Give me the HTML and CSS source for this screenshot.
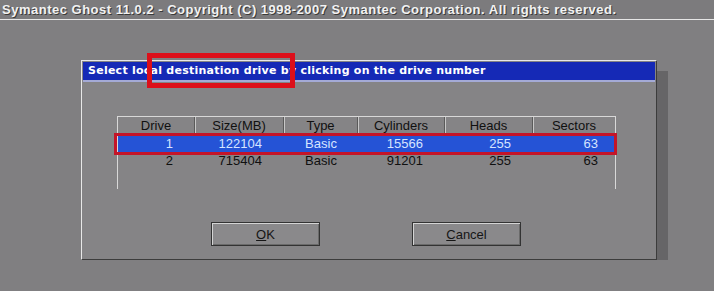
FILE: index.html
```html
<!DOCTYPE html>
<html lang="en">
<head>
  <meta charset="UTF-8">
  <title>Symantec Ghost</title>
  <link rel="stylesheet" href="styles.css">
</head>
<body>

  <div class="topbar">Symantec Ghost 11.0.2 - Copyright (C) 1998-2007 Symantec Corporation. All rights reserved.</div>

  <div class="dialog">
    <div class="title">Select local destination drive by clicking on the drive number</div>
    <div class="mark mark-title"></div>

    <div class="drives">
      <div class="row head">
        <div>Drive</div>
        <div>Size(MB)</div>
        <div>Type</div>
        <div>Cylinders</div>
        <div>Heads</div>
        <div>Sectors</div>
      </div>
      <div class="row data selected">
        <div>1</div>
        <div>122104</div>
        <div class="mid">Basic</div>
        <div>15566</div>
        <div>255</div>
        <div>63</div>
      </div>
      <div class="row data">
        <div>2</div>
        <div>715404</div>
        <div class="mid">Basic</div>
        <div>91201</div>
        <div>255</div>
        <div>63</div>
      </div>
    </div>
    <div class="mark mark-row"></div>

    <div class="buttons">
      <button><u>O</u>K</button>
      <button><u>C</u>ancel</button>
    </div>
  </div>

</body>
</html>
```

FILE: styles.css
```css
body {
  margin: 0;
  background-color: #807f81;
  font-family: "Liberation Sans", Arial, sans-serif;
}

.topbar {
  height: 19px;
  line-height: 19px;
  padding-left: 2px;
  background-color: #7c7b7d;
  border-bottom: 1px solid #e6e6e6;
  color: #f2f2f2;
  font-size: 13px;
  font-weight: bold;
  letter-spacing: 0.5px;
  text-shadow: 1px 1px 0 #3a3a3a;
  white-space: nowrap;
  overflow: hidden;
}

.dialog {
  position: relative;
  margin: 40px 0 0 81px;
  width: 572px;
  height: 196px;
  padding: 1px;
  background-color: #858486;
  border-left: 1px solid #e8e8e8;
  border-top: 1px solid #e8e8e8;
  border-right: 1px solid #3c3c3c;
  border-bottom: 1px solid #3c3c3c;
  box-shadow: 11px 11px 0 #666567;
}

.title {
  height: 18px;
  line-height: 18px;
  padding-left: 5px;
  background-color: #1529b6;
  border-bottom: 2px solid #a4aad6;
  color: #ffffff;
  font-family: "DejaVu Sans", sans-serif;
  font-size: 11px;
  font-weight: bold;
  letter-spacing: 0.25px;
}

.mark {
  position: absolute;
  border-style: solid;
  border-color: #dc0f1a;
}

.mark-title {
  left: 65px;
  top: -8px;
  width: 138px;
  height: 25px;
  border-width: 5px;
}

.mark-row {
  left: 32px;
  top: 72px;
  width: 497px;
  height: 16px;
  border-width: 3px;
  border-color: #c41428;
}

.drives {
  margin: 34px 0 0 34px;
  width: 497px;
  height: 72px;
  border-left: 1px solid #d8d8d8;
  border-top: 1px solid #d8d8d8;
  border-right: 1px solid #d8d8d8;
  font-size: 13px;
  color: #101010;
}

.row {
  display: grid;
  grid-template-columns: 77px 89px 74px 87px 88px 82px;
}

.head {
  height: 17px;
  line-height: 17px;
}

.head div {
  text-align: center;
  border-right: 1px solid #5a5a5a;
  box-shadow: 1px 0 0 #c8c8c8;
}

.head div:last-child {
  border-right: none;
  box-shadow: none;
}

.data {
  height: 17px;
  line-height: 17px;
}

.data div {
  text-align: right;
  padding-right: 22px;
}

.data div:last-child {
  padding-right: 17px;
}

.data div.mid {
  text-align: center;
  padding-right: 0;
}

.selected {
  margin-top: 1px;
  background-color: #2553d6;
  color: #d6e4ff;
}

.buttons {
  display: flex;
  gap: 92px;
  margin: 33px 0 0 128px;
}

button {
  width: 109px;
  height: 24px;
  padding: 0;
  background-color: #8a898b;
  border: 1px solid #333333;
  box-shadow: inset 1px 1px 0 #d4d4d4, inset -1px -1px 0 #6a6a6a;
  font-family: "Liberation Sans", Arial, sans-serif;
  font-size: 13px;
  color: #161616;
}
```
